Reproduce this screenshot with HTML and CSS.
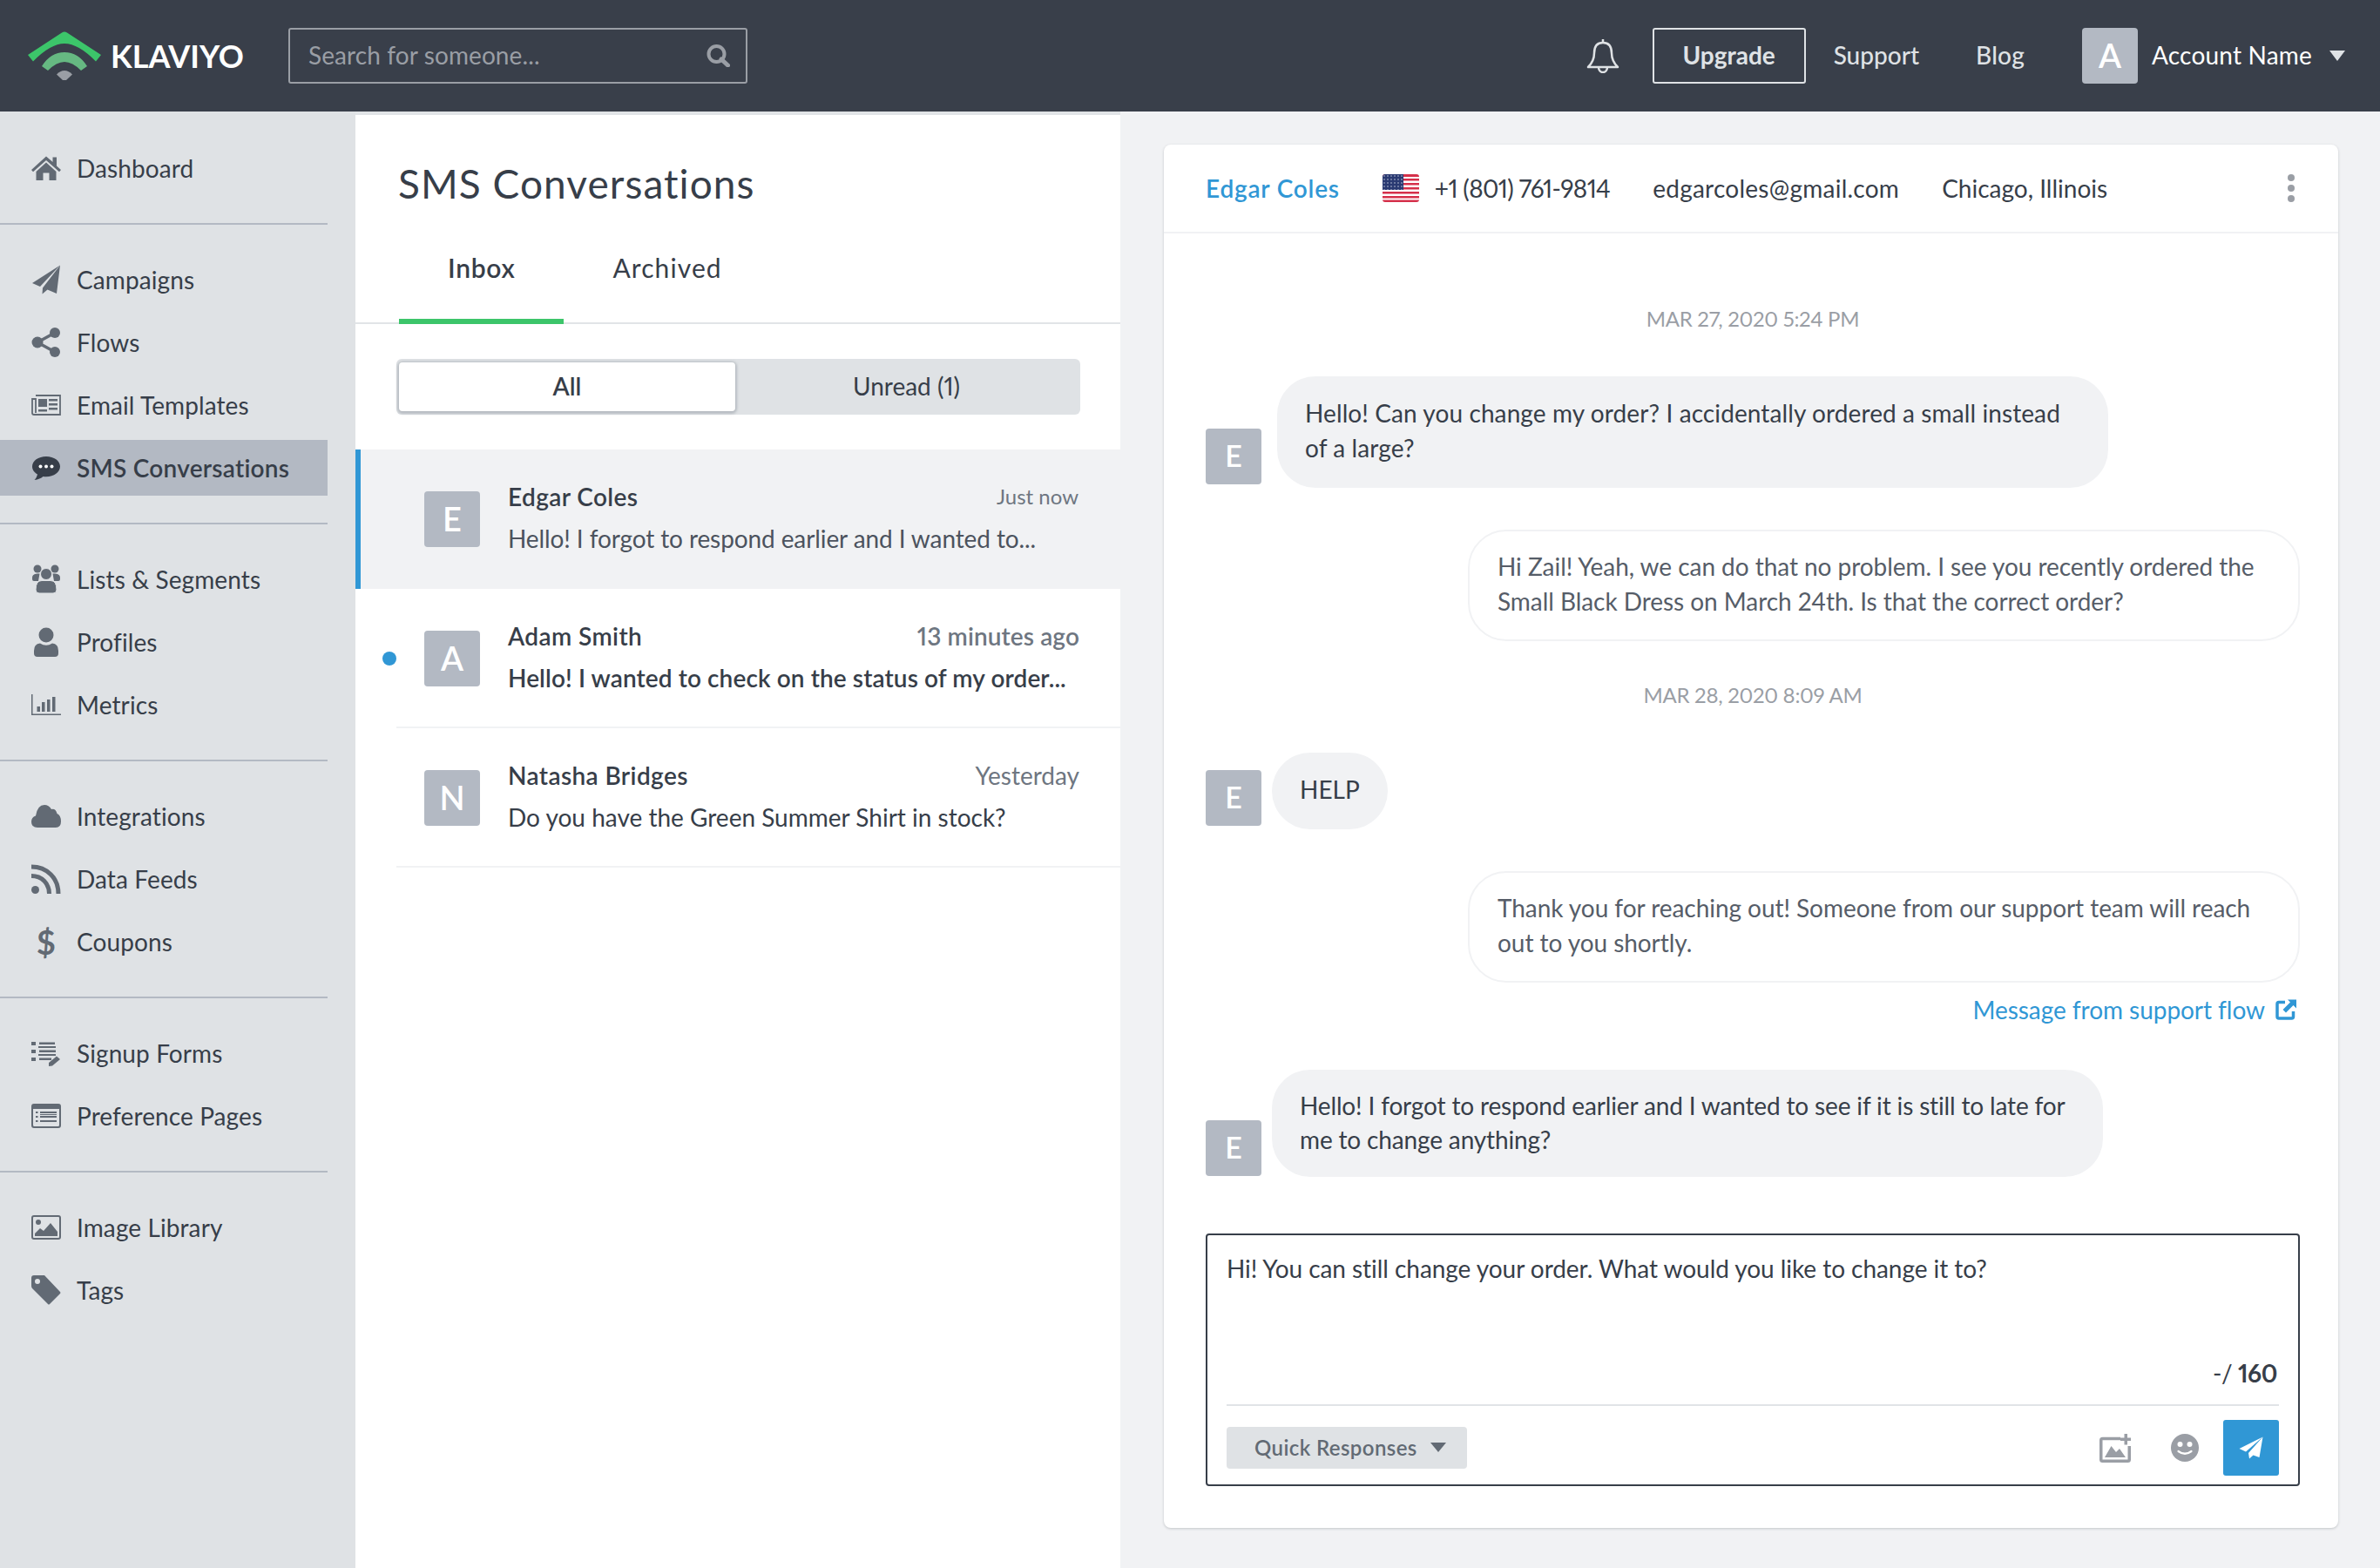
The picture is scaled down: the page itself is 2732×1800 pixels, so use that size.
FILE: index.html
```html
<!DOCTYPE html>
<html lang="en">
<head>
    <meta charset="UTF-8">
    <title>SMS Conversations</title>
    <link rel="stylesheet" href="styles.css">
</head>
<body>
    <header class="topbar">
        <div class="brand">
            <svg class="brand-mark" viewBox="0 0 84 56" width="84" height="56">
                <path fill="#3cc56a" d="M39 1.5 Q42 -.5 45 1.5 L84 27 L78 34.5 Q58 14 42 14 Q26 14 6 34.5 L0 27 Z"/>
                <path fill="#66b982" d="M42 24 Q58 24 68 40 L61 45 Q51 35 42 35 Q33 35 23 45 L16 40 Q26 24 42 24 Z"/>
                <path fill="#9a9ea5" d="M42 45 Q47 45 51 49.500 L44 56 H40 L33 49.500 Q37 45 42 45 Z"/>
            </svg>
            <span class="brand-name">KLAVIYO</span>
        </div>
        <div class="search">
            <span class="search-text">Search for someone...</span>
            <svg viewBox="0 0 27 26" width="27" height="26"><circle cx="11.500" cy="11" r="9" fill="none" stroke="#9a9ea5" stroke-width="4"/><path d="M17 17 L24.500 24" stroke="#9a9ea5" stroke-width="5" stroke-linecap="round"/></svg>
        </div>
        <div class="topbar-right">
            <svg class="bell" viewBox="0 0 38 40" width="38" height="40"><path fill="none" stroke="#dfe2e5" stroke-width="2.500" stroke-linejoin="round" d="M19 5 C11 5 9 11 9 17 C9 25 6 29 2 33 H36 C32 29 29 25 29 17 C29 11 27 5 19 5 Z"/><path fill="none" stroke="#dfe2e5" stroke-width="2.500" d="M19 5 V1 M14 33 C14 41 24 41 24 33"/></svg>
            <a class="upgrade">Upgrade</a>
            <a class="top-link">Support</a>
            <a class="top-link">Blog</a>
            <span class="avatar">A</span>
            <span class="account-name">Account Name</span>
            <span class="caret caret-light"></span>
        </div>
    </header>

    <div class="layout">
        <nav class="sidebar">
            <div class="nav-group">
                <a class="nav-item"><svg class="nav-icon" viewBox="0 0 34 34" width="34" height="34"><path d="M17 3.500 L0 19 l2 2.200 L17 8 L32 21.200 l2-2.200 -5-4.600 V4.500 h-4.500 V10 Z"/><path d="M5.500 21 L17 10.500 L28.500 21 V31 H20.500 V22.500 H13.500 V31 H5.500 Z"/></svg>Dashboard</a>
            </div>
            <div class="nav-group">
                <a class="nav-item"><svg class="nav-icon" viewBox="0 0 34 34" width="34" height="34"><path d="M33 .5 L1 21 L10 25 L33 .5 Z"/><path d="M33 .5 L13 26.500 L12.500 33.500 L18.500 28.500 L29 33 Z"/></svg>Campaigns</a>
                <a class="nav-item"><svg class="nav-icon" viewBox="0 0 34 34" width="34" height="34"><circle cx="27" cy="6" r="6"/><circle cx="7" cy="17" r="6.500"/><circle cx="27" cy="28" r="6"/><path d="M27 6 L7 17 L27 28" fill="none" stroke="#626a74" stroke-width="3.500"/></svg>Flows</a>
                <a class="nav-item"><svg class="nav-icon" viewBox="0 0 34 34" width="34" height="34"><path fill="none" stroke="#626a74" stroke-width="1.800" d="M5 6 H33 V28 H3 Q1 28 1 26 V10 H5 V26"/><rect x="8" y="10" width="10" height="9"/><rect x="20" y="10" width="10" height="2.500"/><rect x="20" y="15" width="10" height="2.500"/><rect x="20" y="20" width="10" height="2.500"/><rect x="8" y="22" width="10" height="2.500"/></svg>Email Templates</a>
                <a class="nav-item nav-item-active"><svg class="nav-icon nav-icon-dark" viewBox="0 0 34 34" width="34" height="34"><path d="M17 4 C8 4 1 9 1 15.500 C1 19.500 3.500 22.500 7 24.500 C6.500 27 5 29.500 3.500 31 C8 30.500 11 29 13.500 27 C14.500 27.200 16 27.200 17 27.200 C26 27.200 33 22 33 15.500 C33 9 26 4 17 4 Z"/><circle cx="10.500" cy="15.500" r="2" fill="#fff"/><circle cx="17" cy="15.500" r="2" fill="#fff"/><circle cx="23.500" cy="15.500" r="2" fill="#fff"/></svg>SMS Conversations</a>
            </div>
            <div class="nav-group">
                <a class="nav-item"><svg class="nav-icon" viewBox="0 0 34 34" width="34" height="34"><circle cx="7" cy="5" r="4.500"/><circle cx="27" cy="5" r="4.500"/><path d="M1 17 Q0 10.500 7 10.500 H9.500 L8 19 H3 Q1 19 1 17 Z M33 17 Q34 10.500 27 10.500 H24.500 L26 19 H31 Q33 19 33 17 Z"/><circle cx="17" cy="11" r="6.500" stroke="#dfe2e5" stroke-width="1"/><path d="M5 29 Q5 18.500 12 18.500 H22 Q29 18.500 29 29 Q29 33 25 33 H9 Q5 33 5 29 Z" stroke="#dfe2e5" stroke-width="1"/></svg>Lists &amp; Segments</a>
                <a class="nav-item"><svg class="nav-icon" viewBox="0 0 34 34" width="34" height="34"><circle cx="17" cy="9" r="8.500"/><path d="M3 27 Q3 19 10 18.500 Q17 23 24 18.500 Q31 19 31 27 V30 Q31 34 27 34 H7 Q3 34 3 30 Z"/></svg>Profiles</a>
                <a class="nav-item"><svg class="nav-icon" viewBox="0 0 34 34" width="34" height="34"><path d="M0 5 H1.500 V27.500 H34 V29 H0 Z"/><rect x="6.500" y="19" width="3.500" height="6"/><rect x="12" y="14" width="3.500" height="11"/><rect x="18" y="11" width="3.500" height="14"/><rect x="24" y="8" width="3.500" height="17"/></svg>Metrics</a>
            </div>
            <div class="nav-group">
                <a class="nav-item"><svg class="nav-icon" viewBox="0 0 34 34" width="34" height="34"><path d="M7 30 Q0 30 0 23.500 Q0 18 5 16.500 Q7 4 15 4 Q20 4 23 9 Q28 8 29.500 14 Q34 16 34 23 Q34 30 28 30 Z"/></svg>Integrations</a>
                <a class="nav-item"><svg class="nav-icon" viewBox="0 0 34 34" width="34" height="34"><circle cx="4.500" cy="29.500" r="4.500"/><path fill="none" stroke="#626a74" stroke-width="5" d="M0 13.500 C12 13.500 20.500 22 20.500 34"/><path fill="none" stroke="#626a74" stroke-width="5" d="M0 3 C18 3 31 16 31 34"/></svg>Data Feeds</a>
                <a class="nav-item"><span class="nav-icon nav-dollar">$</span>Coupons</a>
            </div>
            <div class="nav-group">
                <a class="nav-item"><svg class="nav-icon" viewBox="0 0 34 34" width="34" height="34"><rect y="4" width="5" height="4"/><rect y="13" width="5" height="4"/><rect y="22" width="5" height="4"/><rect x="9" y="4.500" width="18" height="2.500"/><rect x="8" y="9" width="20" height="2"/><rect x="9" y="13.500" width="19" height="2.500"/><rect x="8" y="18" width="20" height="2"/><rect x="9" y="22.500" width="14" height="2.500"/><path d="M20 28 L29 20.500 L33 24 L24 31.500 L20 32 Z"/></svg>Signup Forms</a>
                <a class="nav-item"><svg class="nav-icon" viewBox="0 0 34 34" width="34" height="34"><path d="M3 3 H31 Q34 3 34 6 V28 Q34 31 31 31 H3 Q0 31 0 28 V6 Q0 3 3 3 Z M2 9 V27.500 Q2 29 3.500 29 H30.500 Q32 29 32 27.500 V9 Z"/><rect x="5" y="12" width="2.500" height="2"/><rect x="5" y="17" width="2.500" height="2"/><rect x="5" y="22" width="2.500" height="2"/><rect x="10" y="12" width="19" height="2"/><rect x="10" y="15" width="19" height="1"/><rect x="10" y="17" width="19" height="2"/><rect x="10" y="22" width="19" height="2"/></svg>Preference Pages</a>
            </div>
            <div class="nav-group">
                <a class="nav-item"><svg class="nav-icon" viewBox="0 0 34 34" width="34" height="34"><rect x="1" y="4" width="32" height="26" rx="2" fill="none" stroke="#626a74" stroke-width="2"/><circle cx="8" cy="11" r="3"/><path d="M4 27 V24 L10 18 L14 21 L22 12 L30 22 V27 Z"/></svg>Image Library</a>
                <a class="nav-item"><svg class="nav-icon" viewBox="0 0 34 34" width="34" height="34"><path d="M3 0 H15 L33 19 Q34 20 33 21 L21 33 Q20 34 19 33 L1 15 Q0 14 0 12 V3 Q0 0 3 0 Z"/><circle cx="7" cy="7" r="3" fill="#dfe2e5"/></svg>Tags</a>
            </div>
        </nav>

        <section class="inbox">
            <h1>SMS Conversations</h1>
            <div class="tabs">
                <a class="tab tab-active">Inbox</a>
                <a class="tab">Archived</a>
            </div>
            <div class="segment">
                <a class="segment-on">All</a>
                <a class="segment-off">Unread (1)</a>
            </div>
            <div class="conv conv-selected">
                <div class="conv-inner">
                    <span class="avatar">E</span>
                    <div class="conv-text">
                        <div class="conv-top"><span class="conv-name">Edgar Coles</span><span class="conv-time conv-time-small">Just now</span></div>
                        <div class="conv-snippet">Hello! I forgot to respond earlier and I wanted to...</div>
                    </div>
                </div>
            </div>
            <div class="conv conv-unread">
                <span class="unread-dot"></span>
                <div class="conv-inner conv-inner-line">
                    <span class="avatar">A</span>
                    <div class="conv-text">
                        <div class="conv-top"><span class="conv-name">Adam Smith</span><span class="conv-time">13 minutes ago</span></div>
                        <div class="conv-snippet">Hello! I wanted to check on the status of my order...</div>
                    </div>
                </div>
            </div>
            <div class="conv">
                <div class="conv-inner conv-inner-line">
                    <span class="avatar">N</span>
                    <div class="conv-text">
                        <div class="conv-top"><span class="conv-name">Natasha Bridges</span><span class="conv-time">Yesterday</span></div>
                        <div class="conv-snippet">Do you have the Green Summer Shirt in stock?</div>
                    </div>
                </div>
            </div>
        </section>

        <main class="detail">
            <div class="card">
                <div class="card-head">
                    <a class="contact-name">Edgar Coles</a>
                    <svg class="flag" viewBox="0 0 42 32" width="42" height="32">
                        <defs>
                            <clipPath id="flagClip"><rect width="42" height="32" rx="3"/></clipPath>
                            <pattern id="stars" width="4" height="4" patternUnits="userSpaceOnUse"><rect width="4" height="4" fill="#2a3a72"/><circle cx="2" cy="2" r=".7" fill="#dfe2ee"/></pattern>
                        </defs>
                        <g clip-path="url(#flagClip)">
                            <rect width="42" height="32" fill="#fff"/>
                            <rect y="0" width="42" height="3" fill="#d5304a"/>
                            <rect y="5" width="42" height="2.500" fill="#d5304a"/>
                            <rect y="10" width="42" height="2.500" fill="#d5304a"/>
                            <rect y="15" width="42" height="2.500" fill="#d5304a"/>
                            <rect y="20" width="42" height="2.500" fill="#d5304a"/>
                            <rect y="25" width="42" height="2.500" fill="#d5304a"/>
                            <rect y="29.500" width="42" height="2.500" fill="#d5304a"/>
                            <rect width="24" height="18" fill="url(#stars)"/>
                        </g>
                    </svg>
                    <span class="contact-phone">+1 (801) 761-9814</span>
                    <span class="contact-item contact-email">edgarcoles@gmail.com</span>
                    <span class="contact-item">Chicago, Illinois</span>
                    <span class="kebab"><i></i><i></i><i></i></span>
                </div>
                <div class="chat">
                    <div class="chat-date">MAR 27, 2020 5:24 PM</div>
                    <div class="msg msg-first">
                        <span class="avatar">E</span>
                        <div class="bubble">Hello! Can you change my order? I accidentally ordered a small instead of a large?</div>
                    </div>
                    <div class="msg-out"><div class="bubble bubble-out">Hi Zail! Yeah, we can do that no problem. I see you recently ordered the Small Black Dress on March 24th. Is that the correct order?</div></div>
                    <div class="chat-date chat-date-second">MAR 28, 2020 8:09 AM</div>
                    <div class="msg msg-help">
                        <span class="avatar">E</span>
                        <div class="bubble">HELP</div>
                    </div>
                    <div class="msg-out"><div class="bubble bubble-out">Thank you for reaching out! Someone from our support team will reach out to you shortly.</div></div>
                    <a class="flow-link">Message from support flow
                        <svg viewBox="0 0 24 24" width="24" height="24"><path fill="none" stroke="#3097d5" stroke-width="3.500" d="M11 3.500 H4 Q2 3.500 2 5.500 V20 Q2 22 4 22 H18.500 Q20.500 22 20.500 20 V14"/><path fill="#3097d5" d="M14 .5 H24 V10.500 L20.500 7 L12 15.500 L8.500 12 L17 3.500 Z"/></svg>
                    </a>
                    <div class="msg msg-last">
                        <span class="avatar">E</span>
                        <div class="bubble bubble-tight">Hello! I forgot to respond earlier and I wanted to see if it is still to late for me to change anything?</div>
                    </div>
                </div>
                <div class="composer">
                    <div class="composer-text">Hi! You can still change your order. What would you like to change it to?</div>
                    <div class="composer-count">-/ <b>160</b></div>
                    <div class="composer-bar">
                        <a class="quick"><span>Quick Responses</span><span class="caret caret-dark"></span></a>
                        <svg class="composer-image" viewBox="0 0 36 33" width="36" height="33"><path fill="none" stroke="#9a9ea5" stroke-width="3.500" d="M24 5.500 H3.500 Q1.750 5.500 1.750 7.500 V29.500 Q1.750 31.250 3.500 31.250 H32.500 Q34.250 31.250 34.250 29.500 V14"/><path fill="#9a9ea5" d="M6 27 L13.500 14 L19 21 L23 17 L30 27 Z M28.500 0 H32 V4.500 H36 V8 H32 V12.500 H28.500 V8 H24 V4.500 H28.500 Z"/></svg>
                        <svg class="composer-smile" viewBox="0 0 32 32" width="32" height="32"><circle cx="16" cy="16" r="16" fill="#9a9ea5"/><circle cx="10.500" cy="12" r="3" fill="#fff"/><circle cx="21.500" cy="12" r="3" fill="#fff"/><path d="M8.500 20 Q16 25.500 23.500 20" fill="none" stroke="#fff" stroke-width="2.200" stroke-linecap="round"/></svg>
                        <a class="send"><svg viewBox="0 0 28 26" width="28" height="26"><path fill="#fff" d="M27.500 .5 L.5 14 L8 17.500 L27.500 .5 Z"/><path fill="#fff" d="M27.500 .5 L11 19 L12 25.500 L16.500 21.500 L23.500 24 Z"/></svg></a>
                    </div>
                </div>
            </div>
        </main>
    </div>
</body>
</html>
```

FILE: styles.css
```css
* { box-sizing: border-box; }
body { margin: 0; width: 2732px; height: 1800px; overflow: hidden; background: #f1f2f4; color: #373e49; font-family: "Lato", "Open Sans", sans-serif; font-size: 28px; font-variant-numeric: proportional-nums; }
svg { display: block; flex: none; }

.topbar { height: 128px; background: #393f4a; display: flex; align-items: center; padding: 0 40px 0 32px; }
.brand { width: 299px; display: flex; align-items: center; gap: 11px; }
.brand-name { color: #fff; font-size: 36px; font-weight: 700; }
.search { width: 527px; height: 64px; border: 2px solid #9a9ea5; border-radius: 3px; display: flex; align-items: center; justify-content: space-between; padding: 0 18px 0 21px; color: #9a9ea5; }
.search-text { padding-bottom: 2px; letter-spacing: .1px; }
.topbar-right { margin-left: auto; display: flex; align-items: center; color: #dfe2e5; }
.bell { margin-right: 38px; }
.upgrade { width: 176px; height: 64px; border: 2px solid #dfe2e5; border-radius: 3px; display: flex; align-items: center; justify-content: center; font-weight: 700; margin-right: 32px; padding-bottom: 3px; }
.top-link { font-weight: 500; margin-right: 65px; padding-bottom: 3px; }
.top-link + .top-link { margin-right: 66px; letter-spacing: .2px; }
.avatar { width: 64px; height: 64px; flex: none; border-radius: 4px; background: #b3b9c3; color: #fff; display: flex; align-items: center; justify-content: center; font-size: 38px; font-weight: 600; padding-bottom: 3px; }
.account-name { color: #fff; margin-left: 16px; margin-right: 20px; padding-bottom: 3px; letter-spacing: .2px; }
.caret { display: block; width: 0; height: 0; border-left: 9px solid transparent; border-right: 9px solid transparent; }
.caret-light { border-top: 12px solid #dfe2e5; }
.caret-dark { border-top: 11px solid #626a74; }

.layout { display: flex; height: 1672px; }
.sidebar { width: 408px; background: #dfe2e5; flex: none; padding: 2px 32px 0 0; }
.nav-group { padding: 31px 0; border-bottom: 2px solid #b3b9c3; display: flex; flex-direction: column; gap: 8px; }
.nav-group:last-child { border-bottom: none; }
.nav-item { height: 64px; display: flex; align-items: center; padding-left: 36px; letter-spacing: .1px; }
.nav-item-active { background: #b3b9c3; font-weight: 600; letter-spacing: .25px; }
.nav-icon { width: 34px; height: 34px; margin-right: 18px; fill: #626a74; }
.nav-icon-dark { fill: #373e49; }
.nav-dollar { color: #626a74; font-size: 38px; font-weight: 700; line-height: 34px; text-align: center; }

.inbox { width: 878px; flex: none; background: #fff; border-top: 4px solid #e1e4e7; }
.inbox h1 { margin: 0; padding: 51px 0 0 49px; height: 132px; font-size: 46px; font-weight: 400; line-height: 56px; letter-spacing: 1.05px; }
.tabs { height: 108px; padding-left: 50px; display: flex; border-bottom: 2px solid #e1e4e7; }
.tab { padding: 0 56px; height: 108px; line-height: 86px; font-size: 30px; letter-spacing: 1.1px; }
.tab-active { font-weight: 600; letter-spacing: .7px; border-bottom: 6px solid #3cc56a; }
.segment { width: 785px; height: 64px; margin: 40px 0 40px 47px; background: #dfe2e5; border-radius: 6px; padding: 4px 3px; display: flex; text-align: center; line-height: 54px; }
.segment-on { width: 386px; background: #fff; border-radius: 4px; font-weight: 600; box-shadow: 0 1px 3px 2px rgba(110, 118, 130, .35); }
.segment-off { flex: 1; }
.conv { position: relative; }
.conv-selected { background: #f1f2f4; box-shadow: inset 6px 0 0 #3097d5; }
.conv-inner { margin-left: 47px; padding: 42px 47px 40px 32px; border-bottom: 2px solid transparent; display: flex; align-items: center; gap: 32px; }
.conv-inner-line { border-bottom-color: #f1f2f4; }
.conv-text { flex: 1; margin-top: -4px; display: flex; flex-direction: column; gap: 16px; }
.conv-top { display: flex; justify-content: space-between; align-items: center; }
.conv-top, .conv-snippet { line-height: 32px; }
.conv-name { font-weight: 600; letter-spacing: .4px; }
.conv-time { color: #6e7681; }
.conv-time-small { font-size: 24px; margin-right: 1px; }
.conv-selected .conv-snippet { color: #4c535e; letter-spacing: -.1px; }
.conv-unread .conv-snippet, .conv-unread .conv-time { font-weight: 600; letter-spacing: .1px; }
.unread-dot { position: absolute; left: 31px; top: 72px; width: 16px; height: 16px; border-radius: 50%; background: #3097d5; }

.detail { flex: 1; padding: 38px 48px 0 50px; }
.card { height: 1588px; background: #fff; border-radius: 8px; box-shadow: 0 1px 3px rgba(55, 62, 73, .25); display: flex; flex-direction: column; }
.card-head { height: 102px; flex: none; border-bottom: 2px solid #f1f2f4; display: flex; align-items: center; padding: 0 50px 0 48px; }
.contact-name { color: #3097d5; font-weight: 600; margin-right: 49px; letter-spacing: .8px; }
.flag { margin-right: 18px; }
.contact-phone { margin-right: 49px; letter-spacing: -.65px; }
.contact-item { margin-right: 49px; }
.contact-email { letter-spacing: .25px; }
.kebab { margin-left: auto; display: flex; flex-direction: column; gap: 4px; }
.kebab i { display: block; width: 8px; height: 8px; border-radius: 50%; background: #9a9ea5; }
.chat { flex: 1; padding: 82px 44px 0 48px; display: flex; flex-direction: column; }
.chat-date { text-align: center; color: #9a9ea5; font-size: 24px; line-height: 32px; letter-spacing: -.3px; }
.chat-date-second { margin-top: 46px; }
.msg { display: flex; align-items: flex-end; gap: 12px; }
.msg-first { margin-top: 50px; gap: 18px; }
.msg-help { margin-top: 50px; }
.msg-last { margin-top: 53px; }
.msg .avatar { margin-bottom: 4px; font-size: 34px; }
.msg-last .avatar { margin-bottom: 1px; }
.bubble { background: #f1f2f4; border-radius: 44px; padding: 22px 32px 26px; line-height: 40px; width: 954px; letter-spacing: .1px; }
.msg-help .bubble { width: auto; letter-spacing: 0; }
.bubble-tight { padding: 22px 16px 24px 32px; line-height: 38.5px; letter-spacing: -.15px; }
.msg-out { display: flex; justify-content: flex-end; margin-top: 48px; }
.bubble-out { background: #fff; border: 2px solid #f1f2f4; width: 955px; padding: 20px 30px 24px 32px; color: #565d68; letter-spacing: -.05px; }
.flow-link { color: #3097d5; display: flex; justify-content: flex-end; align-items: center; gap: 12px; margin: 15px 4px 0 0; line-height: 32px; letter-spacing: -.05px; }
.composer { flex: none; height: 290px; margin: 0 44px 48px 48px; border: 2px solid #373e49; border-radius: 4px; padding: 18px 22px 10px; display: flex; flex-direction: column; }
.composer-text { height: 121px; line-height: 40px; letter-spacing: -.05px; }
.composer-count { text-align: right; line-height: 40px; padding-right: 2px; letter-spacing: -.4px; }
.composer-count b { font-weight: 700; }
.composer-bar { margin-top: 16px; border-top: 2px solid #e1e4e7; padding-top: 16px; display: flex; align-items: center; }
.quick { width: 276px; height: 48px; background: #dfe2e5; border-radius: 4px; display: flex; align-items: center; padding: 0 24px 2px 32px; justify-content: space-between; color: #626a74; font-size: 24px; font-weight: 600; letter-spacing: .4px; }
.composer-image { margin-left: auto; margin-right: 46px; }
.composer-smile { margin-right: 28px; }
.send { width: 64px; height: 64px; background: #3097d5; border-radius: 3px; display: flex; align-items: center; justify-content: center; }
```
